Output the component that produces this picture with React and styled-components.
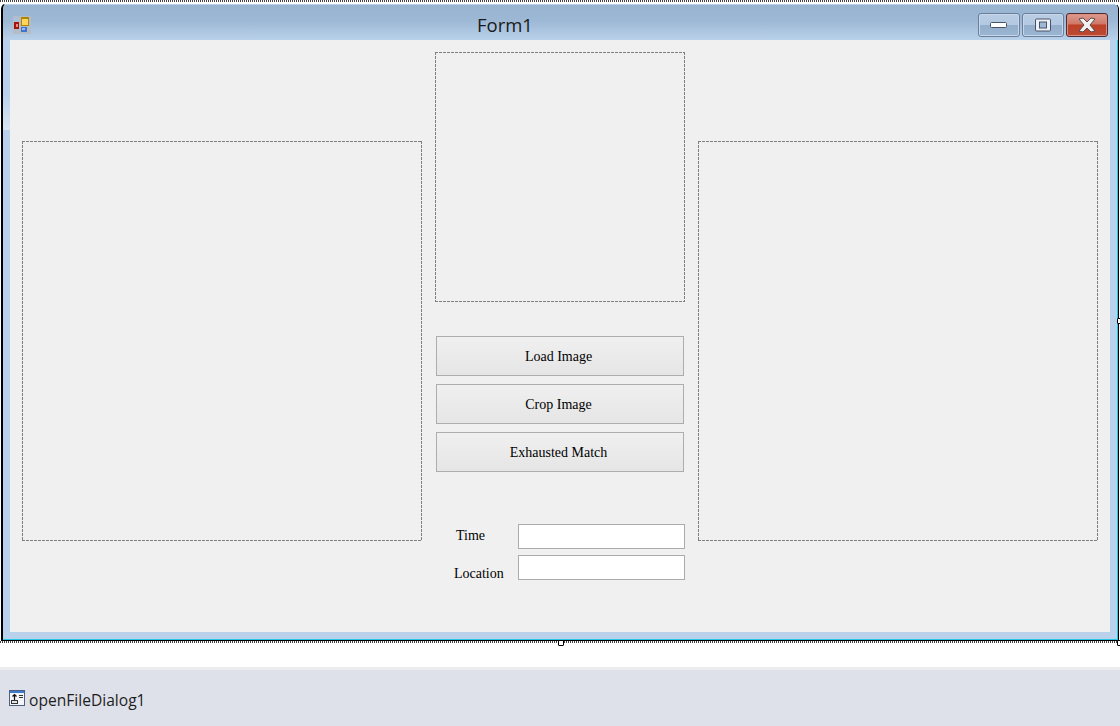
import React from 'react'
import styled, { createGlobalStyle } from 'styled-components'

const GlobalStyle = createGlobalStyle`
  html, body {
    margin: 0;
    padding: 0;
    background: #fff;
  }
  body {
    width: 1120px;
    height: 726px;
    overflow: hidden;
    font-family: "Liberation Serif", "Times New Roman", serif;
  }
`

const Page = styled.div`
  width: 1120px;
  height: 726px;
  display: flex;
  flex-direction: column;
  background: #fff;
`

const DesignSurface = styled.div`
  height: 667px;
  flex: none;
`

const Selection = styled.div`
  position: relative;
  box-sizing: border-box;
  width: 1119px;
  height: 643px;
  padding: 1px 0 0 1px;
  background-image:
    repeating-linear-gradient(90deg, #444 0 1px, #fff 1px 2px),
    repeating-linear-gradient(90deg, #444 0 1px, #fff 1px 2px);
  background-size: 100% 2px, 100% 2px;
  background-position: 0 0, 0 641px;
  background-repeat: no-repeat;
`

const Handle = styled.div`
  position: absolute;
  box-sizing: border-box;
  width: 6px;
  height: 6px;
  background: #fff;
  border: 1px solid #000;
  border-radius: 1px;
  left: ${({ $x }) => $x}px;
  top: ${({ $y }) => $y}px;
`

const Window = styled.div`
  box-sizing: border-box;
  width: 1118px;
  height: 638px;
  margin-top: 2px;
  display: flex;
  flex-direction: column;
  padding: 1px 0 0 0;
  background: #b9d1ea;
  border-left: 2px solid #000;
  border-right: 1px solid #000;
  border-bottom: 1px solid #000;
  border-top: 1px solid #fff;
  border-radius: 6px 6px 0 0;
  box-shadow: inset 0 -1px 0 #23c6e4, inset -1px 0 0 #23c6e4;
  overflow: hidden;
`

const TitleBar = styled.div`
  height: 35px;
  flex: none;
  display: flex;
  align-items: flex-start;
  padding: 0 10px;
  background: linear-gradient(180deg, #99b4d1 0%, #9db8d5 45%, #b9d1ea 100%);
`

const FormIcon = styled.svg`
  width: 18px;
  height: 18px;
  margin-top: 11px;
  flex: none;
`

const Title = styled.div`
  margin: 7px 0 0 446px;
  font-family: "Open Sans", "Noto Sans", sans-serif;
  font-size: 18.5px;
  line-height: 26px;
  color: #1a1a1a;
`

const Controls = styled.div`
  margin-left: auto;
  margin-top: 8px;
  display: flex;
  gap: 2px;
`

const CtlButton = styled.div`
  box-sizing: border-box;
  width: 42px;
  height: 24px;
  display: flex;
  align-items: center;
  justify-content: center;
  border-radius: 3px;
  border: 1px solid ${({ $close }) => ($close ? '#4f2b33' : '#6a7f9b')};
  box-shadow: inset 0 0 0 1px ${({ $close }) => ($close ? '#dc8d7e' : '#c8d8ea')};
  background: ${({ $close }) =>
    $close
      ? 'linear-gradient(180deg, #dd9c8f 0%, #cf7868 45%, #bd4128 50%, #bb4a33 100%)'
      : 'linear-gradient(180deg, #b9cee4 0%, #b3c9e1 48%, #94aecb 52%, #9ab6d3 100%)'};
`

const FrameBody = styled.div`
  flex: 1;
  display: flex;
  padding: 0 8px 7px 7px;
  min-height: 0;
  background: linear-gradient(180deg, #b9d1ea 60%, #d8e4f1 100%) no-repeat 0 0 / 7px 90px;
`

const Client = styled.div`
  box-sizing: border-box;
  width: 1100px;
  height: 592px;
  display: grid;
  grid-template-columns: 400px 250px 400px;
  column-gap: 13px;
  padding: 12px 12px 0;
  background: #f0f0f0;
`

// dashes are 3 on / 1 off, which a css dashed border can't give at 1px
const PictureBox = styled.div`
  box-sizing: border-box;
  width: ${({ $size }) => $size}px;
  height: ${({ $size }) => $size}px;
  margin-top: ${({ $top }) => $top || 0}px;
  background-image:
    repeating-linear-gradient(90deg, #808080 0 3px, transparent 3px 4px),
    repeating-linear-gradient(90deg, #808080 0 3px, transparent 3px 4px),
    repeating-linear-gradient(180deg, #808080 0 3px, transparent 3px 4px),
    repeating-linear-gradient(180deg, #808080 0 3px, transparent 3px 4px);
  background-size: 100% 1px, 100% 1px, 1px 100%, 1px 100%;
  background-position: 0 0, 0 100%, 0 0, 100% 0;
  background-repeat: no-repeat;
`

const Middle = styled.div`
  display: flex;
  flex-direction: column;
`

const Buttons = styled.div`
  display: flex;
  flex-direction: column;
  gap: 8px;
  margin: 34px 1px 0;
`

const ActionButton = styled.div`
  box-sizing: border-box;
  height: 40px;
  display: flex;
  align-items: center;
  justify-content: center;
  padding: 2px 3px 0 0;
  border: 1px solid #adadad;
  background: linear-gradient(180deg, #f0f0f0 0%, #e5e5e5 100%);
  font-size: 14px;
  color: #000;
`

const Fields = styled.div`
  display: grid;
  grid-template-columns: 83px 167px;
  row-gap: 6px;
  margin-top: 52px;
`

const FieldLabel = styled.div`
  padding-left: ${({ $indent }) => $indent}px;
  margin-top: ${({ $shift }) => $shift}px;
  font-size: 14px;
  line-height: 20px;
  color: #000;
`

const TextBox = styled.div`
  box-sizing: border-box;
  height: 25px;
  background: #fff;
  border: 1px solid #ababab;
`

const Tray = styled.div`
  flex: 1;
  display: flex;
  align-items: center;
  gap: 4px;
  padding: 4px 0 0 9px;
  background: #dee1ea;
  border-top: 3px solid #ececef;
`

const TrayIcon = styled.svg`
  width: 16px;
  height: 16px;
  margin-bottom: 5px;
  flex: none;
`

const TrayLabel = styled.span`
  font-family: "Open Sans", "Noto Sans", sans-serif;
  font-size: 15.6px;
  color: #1e1e1e;
`

const FormGlyph = () => (
  <FormIcon viewBox="0 0 18 18">
    <rect width="18" height="18" fill="#b4bcc6" />
    <rect x="1" y="1" width="5" height="5" fill="#a9bfdc" />
    <rect x="1" y="6" width="5" height="7" fill="#a5140c" />
    <rect x="3" y="8" width="2" height="3" fill="#ee8a80" />
    <rect x="8" y="1" width="8" height="9" fill="#ad8500" />
    <rect x="9" y="3" width="6" height="6" fill="#ffd65a" />
    <rect x="8" y="11" width="6" height="5" fill="#3f73cf" />
    <rect x="9" y="12" width="3" height="2" fill="#93c0f3" />
  </FormIcon>
)

const MinimizeGlyph = () => (
  <svg width="18" height="8" viewBox="0 0 18 8">
    <rect x="0.5" y="1.5" width="16" height="5" rx="1" fill="#fff" stroke="#46536b" />
  </svg>
)

const MaximizeGlyph = () => (
  <svg width="18" height="14" viewBox="0 0 18 14">
    <rect x="1.5" y="1" width="15" height="12" rx="1" fill="#eef1f5" stroke="#46536b" />
    <rect x="5.5" y="4" width="7" height="6" fill="#9fb8d4" stroke="#46536b" />
  </svg>
)

const CloseGlyph = () => (
  <svg width="20" height="16" viewBox="0 0 20 16">
    <path
      d="M2 2 L6 1 L10 5 L14 1 L18 2 L13 8 L18 14 L14 15 L10 11 L6 15 L2 14 L7 8 Z"
      fill="#f1f1f1"
      stroke="#5b4a4c"
      strokeWidth="1"
    />
  </svg>
)

const DialogGlyph = () => (
  <TrayIcon viewBox="0 0 16 16">
    <rect x="0.5" y="0.5" width="15" height="15" fill="#f4f5f8" stroke="#4d5f80" />
    <rect x="1" y="1" width="14" height="2" fill="#3f7cd0" />
    <rect x="2.5" y="10.5" width="6" height="3" fill="#dfe3ea" stroke="#333" />
    <path d="M5.5 10 V5 M3.5 6.5 L5.5 4.5 L7.5 6.5" stroke="#111" strokeWidth="1.2" fill="none" />
    <path d="M10 5.5 H14 M10 7.5 H14" stroke="#333" strokeWidth="1" />
  </TrayIcon>
)

const App = () => {
  return (
    <Page>
      <GlobalStyle />
      <DesignSurface>
        <Selection>
          <Window>
            <TitleBar>
              <FormGlyph />
              <Title>Form1</Title>
              <Controls>
                <CtlButton><MinimizeGlyph /></CtlButton>
                <CtlButton><MaximizeGlyph /></CtlButton>
                <CtlButton $close><CloseGlyph /></CtlButton>
              </Controls>
            </TitleBar>
            <FrameBody>
              <Client>
                <PictureBox $size={400} $top={89} />
                <Middle>
                  <PictureBox $size={250} />
                  <Buttons>
                    <ActionButton>Load Image</ActionButton>
                    <ActionButton>Crop Image</ActionButton>
                    <ActionButton>Exhausted Match</ActionButton>
                  </Buttons>
                  <Fields>
                    <FieldLabel $indent={21} $shift={2}>Time</FieldLabel>
                    <TextBox />
                    <FieldLabel $indent={19} $shift={9}>Location</FieldLabel>
                    <TextBox />
                  </Fields>
                </Middle>
                <PictureBox $size={400} $top={89} />
              </Client>
            </FrameBody>
          </Window>
          <Handle $x={558} $y={640} />
          <Handle $x={1117} $y={318} />
          <Handle $x={1117} $y={640} />
        </Selection>
      </DesignSurface>
      <Tray>
        <DialogGlyph />
        <TrayLabel>openFileDialog1</TrayLabel>
      </Tray>
    </Page>
  )
}

export default App
